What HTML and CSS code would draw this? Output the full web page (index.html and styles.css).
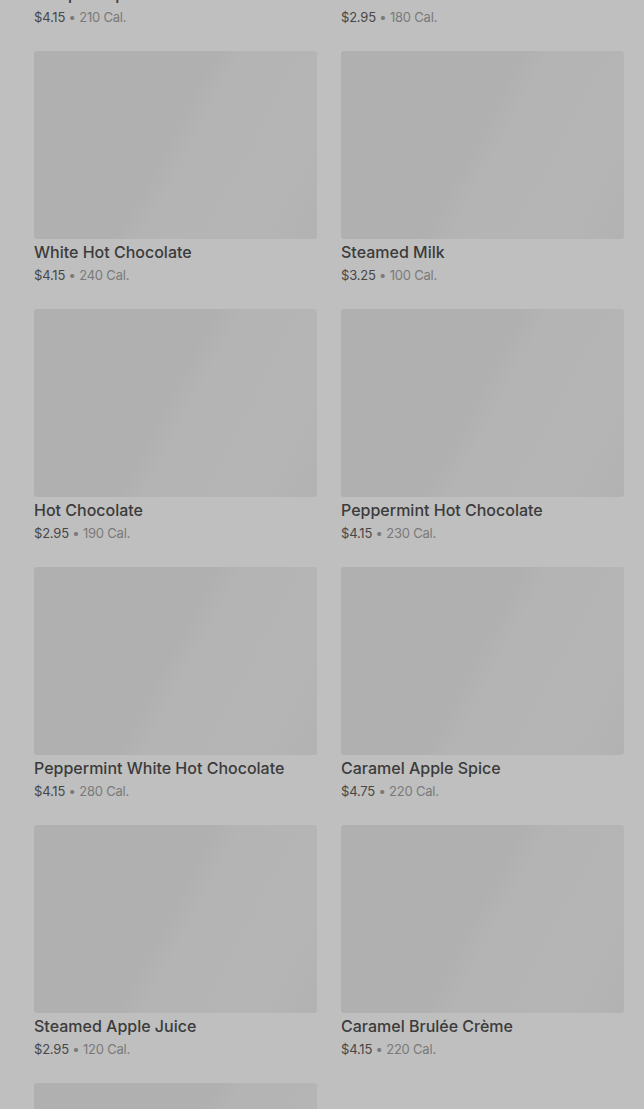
FILE: index.html
```html
<!DOCTYPE html>
<html lang="en">
<head>
  <meta charset="UTF-8">
  <meta name="viewport" content="width=device-width, initial-scale=1.0">
  <title>Hot Drinks</title>
  <link rel="stylesheet" href="styles.css">
</head>
<body>
  <main class="menu">
    <!-- Product grid, scrolled partway down -->
    <div class="grid">
      <div class="item">
        <div class="thumb"></div>
        <div class="name">Pumpkin Spice Crème</div>
        <div class="meta"><span class="price">$4.15</span> • 210 Cal.</div>
      </div>
      <div class="item">
        <div class="thumb"></div>
        <div class="name">Vanilla Crème</div>
        <div class="meta"><span class="price">$2.95</span> • 180 Cal.</div>
      </div>
      <div class="item">
        <div class="thumb"></div>
        <div class="name">White Hot Chocolate</div>
        <div class="meta"><span class="price">$4.15</span> • 240 Cal.</div>
      </div>
      <div class="item">
        <div class="thumb"></div>
        <div class="name">Steamed Milk</div>
        <div class="meta"><span class="price">$3.25</span> • 100 Cal.</div>
      </div>
      <div class="item">
        <div class="thumb"></div>
        <div class="name">Hot Chocolate</div>
        <div class="meta"><span class="price">$2.95</span> • 190 Cal.</div>
      </div>
      <div class="item">
        <div class="thumb"></div>
        <div class="name">Peppermint Hot Chocolate</div>
        <div class="meta"><span class="price">$4.15</span> • 230 Cal.</div>
      </div>
      <div class="item">
        <div class="thumb"></div>
        <div class="name">Peppermint White Hot Chocolate</div>
        <div class="meta"><span class="price">$4.15</span> • 280 Cal.</div>
      </div>
      <div class="item">
        <div class="thumb"></div>
        <div class="name">Caramel Apple Spice</div>
        <div class="meta"><span class="price">$4.75</span> • 220 Cal.</div>
      </div>
      <div class="item">
        <div class="thumb"></div>
        <div class="name">Steamed Apple Juice</div>
        <div class="meta"><span class="price">$2.95</span> • 120 Cal.</div>
      </div>
      <div class="item">
        <div class="thumb"></div>
        <div class="name">Caramel Brulée Crème</div>
        <div class="meta"><span class="price">$4.15</span> • 220 Cal.</div>
      </div>
      <div class="item">
        <div class="thumb"></div>
        <div class="name">Cinnamon Dolce Crème</div>
        <div class="meta"><span class="price">$4.15</span> • 250 Cal.</div>
      </div>
    </div>
  </main>
</body>
</html>
```

FILE: styles.css
```css
/* Global */
body {
  margin: 0;
  padding: 0;
  background: #bfbfbf;
  font-family: Inter, 'Noto Sans', sans-serif;
  overflow: hidden;
}
.menu {
  padding: 0 20px 0 34px;
}
/* Grid is scrolled up so the first row is cut off */
.grid {
  margin-top: -207px;
  display: grid;
  grid-template-columns: 283px 283px;
  column-gap: 24px;
  row-gap: 24px;
}
.thumb {
  height: 188px;
  border-radius: 3px;
  background: linear-gradient(118deg, #b0b0b0 0%, #b0b0b0 47%, #b4b4b4 55%, #b5b5b5 85%, #b2b2b2 100%);
}
.name {
  margin-top: 3px;
  font-size: 16px;
  line-height: 20px;
  font-weight: 500;
  color: #3b3b3b;
  white-space: nowrap;
}
.meta {
  margin-top: 3px;
  font-size: 13px;
  line-height: 20px;
  color: #7a7a7a;
  letter-spacing: -0.2px;
}
.price {
  color: #474747;
}
```
